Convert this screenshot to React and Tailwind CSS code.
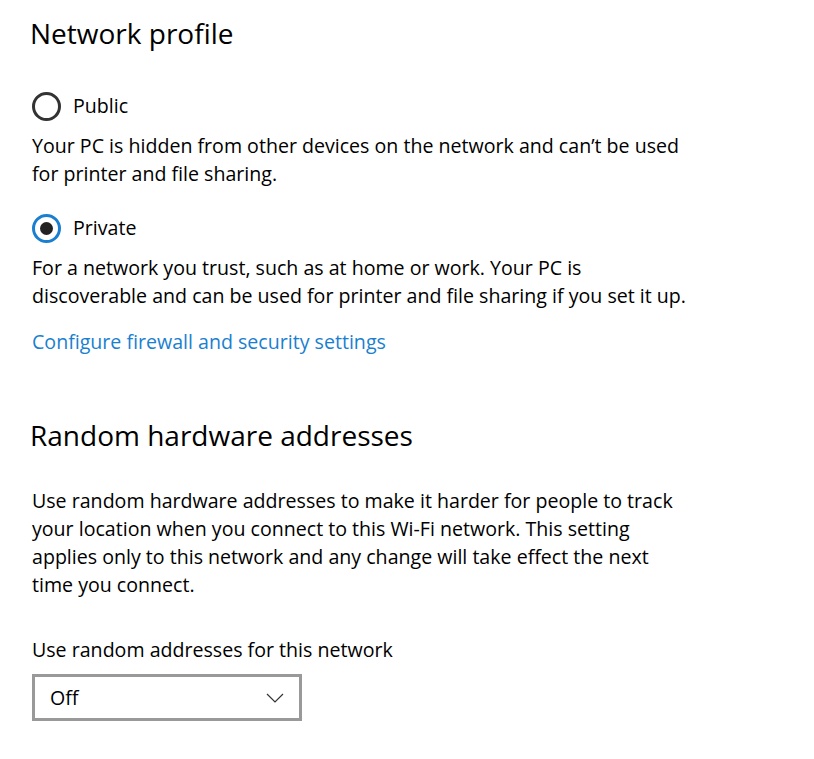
const Radio = ({ checked, label }) => (
  <div className="flex items-center gap-[12px] h-[30px]">
    <div
      className={`w-[29px] h-[29px] rounded-full border-[3px] flex items-center justify-center ${
        checked ? 'border-[#1a7fd0]' : 'border-[#333333]'
      }`}
    >
      {checked && <div className="w-[13px] h-[13px] rounded-full bg-[#222222]" />}
    </div>
    <span>{label}</span>
  </div>
);

const App = () => {
  return (
    <div
      className="w-[814px] h-[759px] bg-white text-black pl-[32px] text-[19.6px] leading-[28px]"
      style={{ fontFamily: '"Open Sans", "Noto Sans", sans-serif' }}
    >
      <h2 className="text-[28px] leading-[36px] pt-[15px] -ml-[2px]">Network profile</h2>

      <div className="mt-[40px]">
        <Radio label="Public" />
      </div>
      <p className="mt-[11px] whitespace-nowrap">
        Your PC is hidden from other devices on the network and can’t be used
        <br />
        for printer and file sharing.
      </p>

      <div className="mt-[25px]">
        <Radio checked label="Private" />
      </div>
      <p className="mt-[11px] whitespace-nowrap">
        For a network you trust, such as at home or work. Your PC is
        <br />
        discoverable and can be used for printer and file sharing if you set it up.
      </p>

      <p className="mt-[18px] text-[#1a7fd0]">Configure firewall and security settings</p>

      <h2 className="text-[28px] leading-[36px] mt-[61px] -ml-[2px]">Random hardware addresses</h2>

      <p className="mt-[34px] whitespace-nowrap">
        Use random hardware addresses to make it harder for people to track
        <br />
        your location when you connect to this Wi-Fi network. This setting
        <br />
        applies only to this network and any change will take effect the next
        <br />
        time you connect.
      </p>

      <p className="mt-[37px]">Use random addresses for this network</p>

      <div className="mt-[10px] w-[270px] h-[47px] border-[3px] border-[#999999] flex items-center justify-between pl-[15px] pr-[15px]">
        <span>Off</span>
        <svg width="18" height="10" viewBox="0 0 18 10" fill="none" stroke="#333" strokeWidth="1.2">
          <path d="M1 1 L9 9 L17 1" />
        </svg>
      </div>
    </div>
  );
};

export default App;
